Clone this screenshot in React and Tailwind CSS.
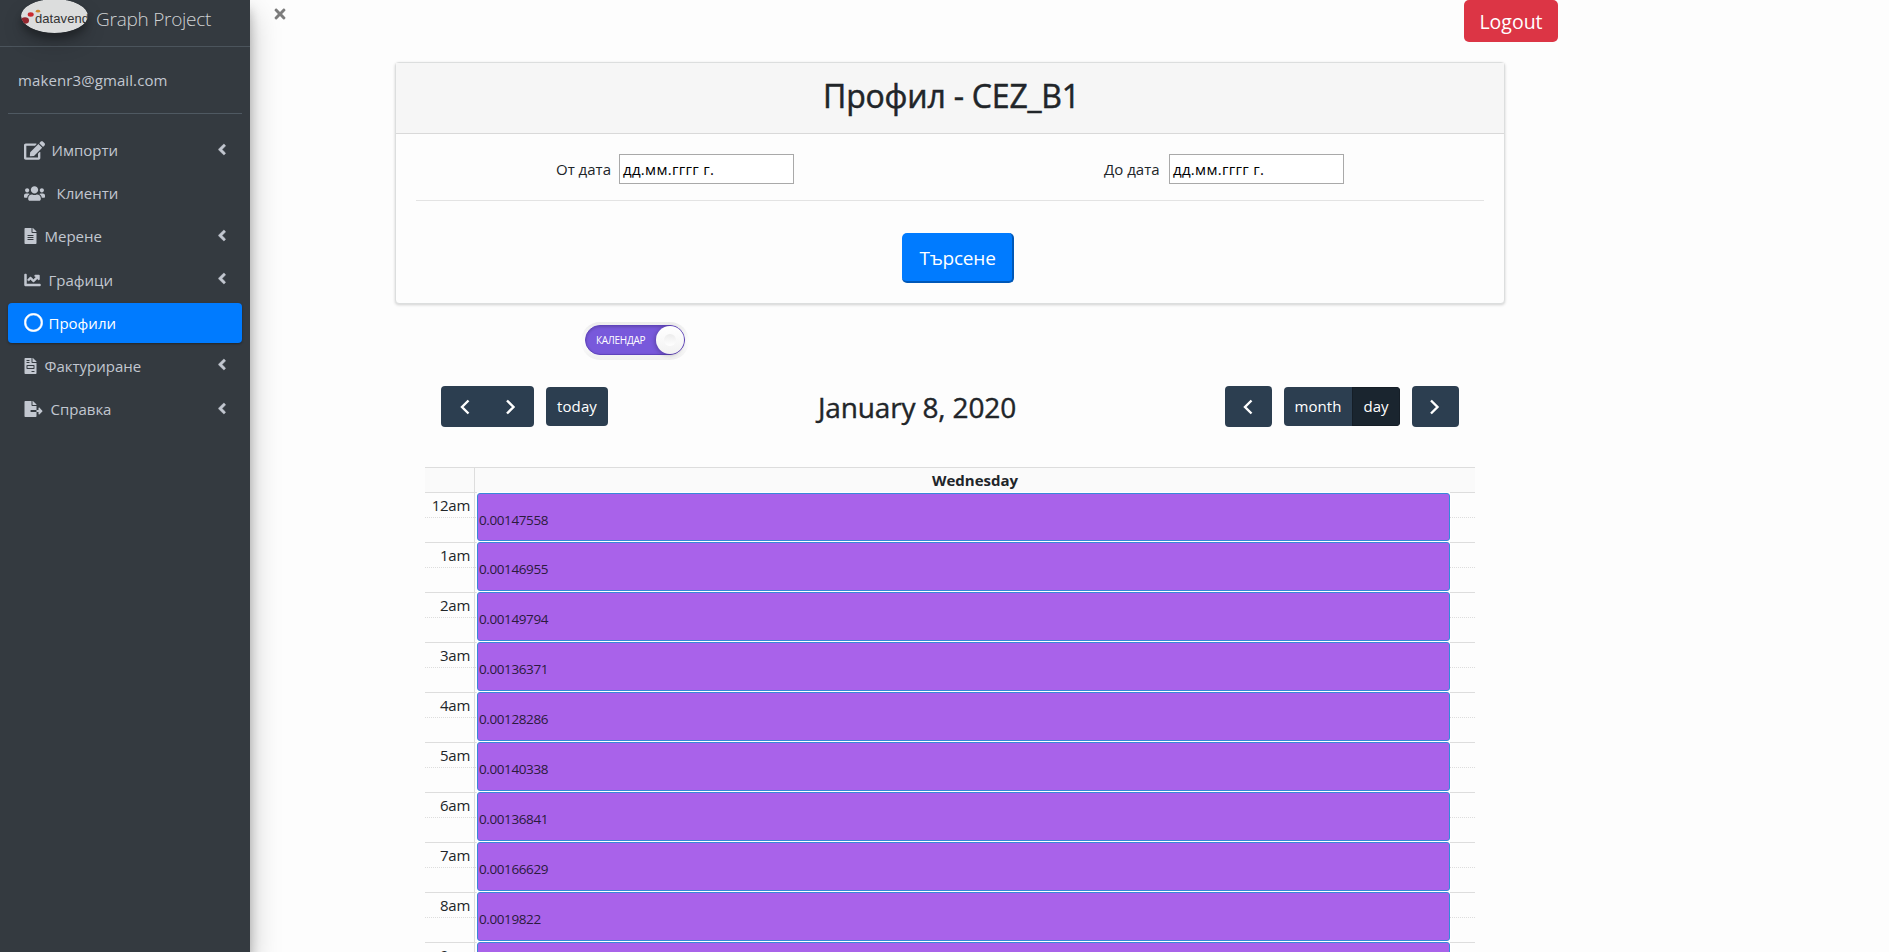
import React from 'react';
import { FaEdit, FaUsers, FaFileAlt, FaChartLine, FaRegCircle, FaFileInvoice, FaFileExport, FaAngleLeft, FaTimes } from 'react-icons/fa';

const NAV = [
  { label: 'Импорти', Icon: FaEdit, icon: 'h-[19px] w-[21px]', gap: 'ml-[7px]', chevron: true },
  { label: 'Клиенти', Icon: FaUsers, icon: 'h-[17px] w-[21px]', gap: 'ml-[12px]' },
  { label: 'Мерене', Icon: FaFileAlt, icon: 'h-[16px] w-[13px]', gap: 'ml-[8px]', chevron: true },
  { label: 'Графици', Icon: FaChartLine, icon: 'h-[16px] w-[17px] stroke-[16px] stroke-current', gap: 'ml-[8px]', chevron: true },
  { label: 'Профили', Icon: FaRegCircle, icon: 'h-[19px] w-[19px] stroke-[14px] stroke-current', gap: 'ml-[6px]', active: true },
  { label: 'Фактуриране', Icon: FaFileInvoice, icon: 'h-[16px] w-[13px]', gap: 'ml-[8px]', chevron: true },
  { label: 'Справка', Icon: FaFileExport, icon: 'h-[16px] w-[19px]', gap: 'ml-[8px]', chevron: true },
];

const HOURS = [
  ['12am', '0.00147558'],
  ['1am', '0.00146955'],
  ['2am', '0.00149794'],
  ['3am', '0.00136371'],
  ['4am', '0.00128286'],
  ['5am', '0.00140338'],
  ['6am', '0.00136841'],
  ['7am', '0.00166629'],
  ['8am', '0.0019822'],
  ['9am', ''],
];

function Logo() {
  return (
    <svg width="67" height="34" viewBox="0 0 67 34" className="-mt-px block shrink-0 rounded-[50%] shadow-[0_10px_20px_rgba(0,0,0,0.19),0_6px_6px_rgba(0,0,0,0.23)]">
      <ellipse cx="33.5" cy="17" rx="33.5" ry="17" fill="#dcdddd" />
      <ellipse cx="4" cy="21.5" rx="4" ry="3.2" fill="#93272f" />
      <ellipse cx="9.7" cy="15.5" rx="3" ry="2.2" fill="#c9292d" />
      <ellipse cx="17" cy="12.2" rx="2.2" ry="1.4" fill="#d08a2e" />
      <text x="14" y="24" textLength="54" fill="#333" style={{ fontSize: 13, fontFamily: 'Liberation Sans, sans-serif' }}>datavend</text>
    </svg>
  );
}

function Sidebar() {
  return (
    <aside className="z-10 flex w-[250px] shrink-0 flex-col bg-[#343a40] text-[#c2c7d0] shadow-[0_14px_28px_rgba(0,0,0,0.25),0_10px_10px_rgba(0,0,0,0.22)]">
      <div className="flex h-[47px] shrink-0 items-start border-b border-[#4b545c] pl-[21px]">
        <Logo />
        <span className="ml-[8px] mt-[4px] whitespace-nowrap text-[19px] leading-[30px] font-light tracking-[-0.25px] text-[#d0d2d4]">Graph Project</span>
      </div>
      <div className="mx-2 h-[67px] shrink-0 border-b border-[#4f5962] pl-[10px] pt-[21px] text-[15px] leading-[24px] tracking-[0.1px]">makenr3@gmail.com</div>
      <nav className="mt-[16px] flex flex-col gap-[3.2px] px-2">
        {NAV.map(({ label, Icon, icon, gap, chevron, active }) => (
          <a
            key={label}
            className={
              'flex h-[40px] items-center rounded-[4px] pl-[15.5px] pr-[15px] ' +
              (active ? 'bg-[#007bff] text-white shadow-[0_1px_3px_rgba(0,0,0,0.12),0_1px_2px_rgba(0,0,0,0.24)]' : '')
            }
          >
            <Icon className={'shrink-0 ' + icon} preserveAspectRatio="xMidYMid meet" />
            <span className={'text-[15px] leading-[24px] ' + gap}>{label}</span>
            {chevron && <FaAngleLeft className="ml-auto mb-[2px] h-[17px] w-[10px] stroke-current stroke-[16px]" />}
          </a>
        ))}
      </nav>
    </aside>
  );
}

function DateField({ label, className, gap }) {
  return (
    <label className={'flex items-center ' + className}>
      <span className={'whitespace-nowrap text-[15px] text-[#212529] ' + gap}>{label}</span>
      <span className="flex h-[30px] w-[175px] shrink-0 items-center border border-[#a9a9a9] bg-white pl-[3px] text-[15px] tracking-[0.3px] text-black">дд.мм.гггг г.</span>
    </label>
  );
}

function SearchCard() {
  return (
    <section className="ml-[145px] mt-[20px] h-[242px] w-[1110px] shrink-0 rounded-[4px] border border-[#dcdede] bg-[#fdfdfd] shadow-[0_1px_3px_rgba(0,0,0,0.18)]">
      <header className="flex h-[71px] items-center justify-center border-b border-[#d9d9d9] bg-[#f6f6f6] pb-[4px] pl-[3px]">
        <h2 className="whitespace-nowrap text-[32px] leading-[38px] font-medium tracking-[-0.2px] text-[#212529] [-webkit-text-stroke:0.5px_#212529]">Профил - CEZ_B1</h2>
      </header>
      <div className="mx-[20px] flex h-[67px] items-start border-b border-[#e3e3e3] pt-[20px]">
        <DateField label="От дата" className="ml-[140px]" gap="w-[63px]" />
        <DateField label="До дата" className="ml-[310px]" gap="w-[65px]" />
      </div>
      <div className="flex pl-[506px] pt-[32px]">
        <button className="h-[50px] w-[112px] rounded-[5px] border-b-2 border-r-2 border-[#0058b8] bg-[#007bff] pt-[2px] pl-[1px] text-[19px] tracking-[-0.2px] text-white">Търсене</button>
      </div>
    </section>
  );
}

function Toggle() {
  return (
    <div className="ml-[331px] mt-[18px] flex h-[38px] w-[108px] shrink-0 items-start rounded-full bg-gradient-to-b from-[#ececec] via-[#fdfdfd] to-[#f0f0f0] px-[4px] pt-[3px]">
      <div className="flex h-[30px] w-[100px] items-center justify-between rounded-full border border-[#5f43bd] bg-[#7859db] pl-[10px] shadow-[inset_0_1px_3px_rgba(0,0,0,0.2)]">
        <span className="text-[10px] font-medium tracking-[-0.3px] text-white">КАЛЕНДАР</span>
        <span className="flex size-[28px] items-center justify-center rounded-full bg-gradient-to-b from-white to-[#f2f2f2] shadow-[-1px_1px_4px_rgba(0,0,0,0.25)]">
          <span className="size-[12px] rounded-full bg-gradient-to-b from-[#ececec] to-white" />
        </span>
      </div>
    </div>
  );
}

function Chevron({ right }) {
  return (
    <svg width="12" height="16" viewBox="0 0 12 16" fill="none" stroke="currentColor" strokeWidth="2.4">
      <path d={right ? 'M2 1.5 8.5 8 2 14.5' : 'M9.5 1.5 3 8l6.5 6.5'} />
    </svg>
  );
}

function Toolbar() {
  const dark = 'flex items-center justify-center bg-[#2c3e50] text-white ';
  return (
    <div className="ml-[191px] mt-[26px] flex h-[41px] w-[1018px] shrink-0 items-center justify-between">
      <div className="flex items-center gap-3">
        <div className="flex overflow-hidden rounded-[4px]">
          <button className={dark + 'h-[41px] w-[47px]'}><Chevron /></button>
          <button className={dark + 'h-[41px] w-[46px]'}><Chevron right /></button>
        </div>
        <button className={dark + 'h-[39px] w-[62px] rounded-[4px] pb-[1px] text-[15px] tracking-[0.1px]'}>today</button>
      </div>
      <h2 className="mt-[1px] whitespace-nowrap pl-[1px] text-[28px] font-medium tracking-[-0.15px] text-[#212529] [-webkit-text-stroke:0.4px_#212529]">January 8, 2020</h2>
      <div className="flex items-center gap-3">
        <button className={dark + 'h-[41px] w-[47px] rounded-[4px]'}><Chevron /></button>
        <div className="flex overflow-hidden rounded-[4px]">
          <button className={dark + 'h-[39px] w-[68px] pb-[1px] text-[15px] tracking-[0.1px]'}>month</button>
          <button className="h-[39px] w-[48px] border border-[#151e27] bg-[#1a252f] pb-[1px] text-[15px] text-white">day</button>
        </div>
        <button className={dark + 'h-[41px] w-[47px] rounded-[4px]'}><Chevron right /></button>
      </div>
    </div>
  );
}

function DayGrid() {
  return (
    <div className="ml-[175px] mt-[40px] w-[1050px] shrink-0 border-t border-[#ddd] text-[#212529]">
      <div className="flex h-[24px] bg-[#fafafa]">
        <div className="w-[50px] border-r border-[#ddd]" />
        <div className="flex-1 text-center text-[15px] leading-[25px] font-bold">Wednesday</div>
      </div>
      {HOURS.map(([hour, value], i) => (
        <div key={hour} className="flex h-[50px]">
          <div className="flex w-[50px] flex-col border-r border-[#ddd]">
            <div className="h-[25px] border-t border-[#ddd] pr-[4px] text-right text-[15px] leading-[24px] tracking-[-0.3px]">{hour}</div>
            <div className="h-[25px] border-t border-dotted border-[#ddd]" />
          </div>
          <div className="flex w-[2px] flex-col">
            <div className="h-[25px] border-t border-[#ddd]" />
            <div className="h-[25px] border-t border-dotted border-[#ddd]" />
          </div>
          <div
            className={
              'w-[973px] rounded-[3px] border border-[#3788d8] bg-[#a962ea] pl-[1px] pt-[16px] text-[13.5px] leading-[20px] tracking-[-0.4px] text-[#2b1b3d] shadow-[0_0_0_1px_#fff] ' +
              (i === 0 ? 'mt-px h-[48px]' : 'h-[49px]')
            }
          >
            {value}
          </div>
          <div className="flex flex-1 flex-col">
            <div className="h-[25px] border-t border-[#ddd]" />
            <div className="h-[25px] border-t border-dotted border-[#ddd]" />
          </div>
        </div>
      ))}
    </div>
  );
}

export default function App() {
  return (
    <div className="flex h-[952px] w-[1889px] overflow-hidden bg-[#fdfdfd] font-['Open_Sans','Noto_Sans',sans-serif]">
      <Sidebar />
      <main className="flex flex-1 flex-col">
        <div className="flex h-[42px] shrink-0 justify-between">
          <FaTimes className="ml-[22px] mt-[6px] size-[16px] text-[#7c7c7c]" />
          <button className="mr-[331px] h-[42px] w-[94px] rounded-[5px] bg-[#dc3545] pt-[2px] text-[19.5px] text-white">Logout</button>
        </div>
        <SearchCard />
        <Toggle />
        <Toolbar />
        <DayGrid />
      </main>
    </div>
  );
}
